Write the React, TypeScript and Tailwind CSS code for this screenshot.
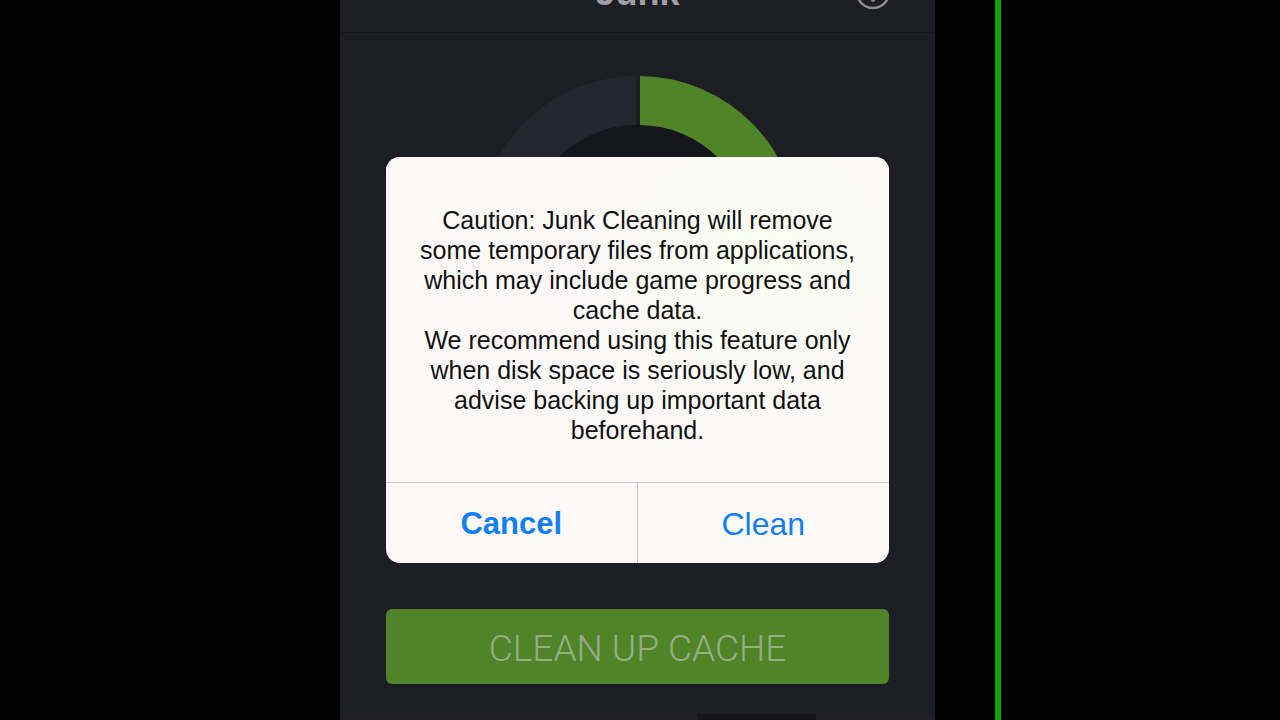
import { useState } from "react"

const CAUTION = [
  "Caution: Junk Cleaning will remove some temporary files from applications, which may include game progress and cache data.",
  "We recommend using this feature only when disk space is seriously low, and advise backing up important data beforehand.",
]

function UsageRing() {
  return (
    <svg viewBox="0 0 322 322" className="mt-[43px] size-[322px]" aria-hidden="true">
      <circle cx="161" cy="161" r="113" fill="#15151c" />
      <path d="M159 0 A160 161 0 1 0 161 322 L161 273 A112 112 0 1 1 159 49 Z" fill="#24262f" />
      <path d="M163 0 A160 161 0 0 1 161 322 L161 273 A112 112 0 0 0 163 49 Z" fill="#508428" />
    </svg>
  )
}

function HelpIcon() {
  return (
    <svg viewBox="0 0 36 36" className="size-9" fill="none" aria-hidden="true">
      <circle cx="18" cy="17" r="16" stroke="#8e8e92" strokeWidth="2.5" />
      <path d="M12 13a6 6 0 1 1 8 5.5c-1.5.6-2 1.500-2 3" stroke="#8e8e92" strokeWidth="2.5" />
      <circle cx="18" cy="25" r="2" fill="#8e8e92" />
    </svg>
  )
}

export default function App() {
  const [open, setOpen] = useState(true)

  return (
    <div className="grid min-h-screen grid-cols-[340fr_595fr_60fr_6px_279fr] overflow-hidden bg-black font-['Liberation_Sans',Arial,sans-serif]">
      <main className="relative col-start-2 flex flex-col bg-[#1d1e23]">
        {/* header is scrolled partly out of view */}
        <header className="-mt-[47px] grid h-20 grid-cols-[1fr_auto_1fr] items-center border-b border-[#15161a] px-11">
          <h1 className="col-start-2 text-4xl leading-9 font-bold text-[#a0a0a4]">Junk</h1>
          <button type="button" aria-label="Help" className="justify-self-end">
            <HelpIcon />
          </button>
        </header>

        <div className="flex flex-1 items-start justify-center">
          <UsageRing />
        </div>

        <div className="px-[46px] pb-[30px]">
          <button
            type="button"
            onClick={() => setOpen(true)}
            className="h-[75px] w-full rounded-md bg-[#508428] pt-1 font-[Roboto,sans-serif] text-[37px] font-light text-[#96ae86]"
          >
            CLEAN UP CACHE
          </button>
        </div>

        <div className="grid h-1.5 grid-cols-5 bg-[#211e24]">
          <span className="col-start-4 bg-[#17131a]" />
        </div>

        {open && (
          <div className="absolute inset-0 flex items-center justify-center px-[46px]">
            <div
              role="alertdialog"
              aria-modal="true"
              aria-describedby="caution"
              className="w-full overflow-hidden rounded-[14px] bg-[#fdf9f9]"
            >
              <div
                id="caution"
                className="bg-[radial-gradient(circle_at_74%_30%,#fbfff3,#fdf9f9_45%)] px-6 pt-12 pb-[37px] text-center text-[25px] leading-[30px] text-[#111]"
              >
                {CAUTION.map((line) => (
                  <p key={line}>{line}</p>
                ))}
              </div>
              <div className="grid grid-cols-2 border-t border-[#d0c9cc] text-[32px] text-[#127fee]">
                <button
                  type="button"
                  onClick={() => setOpen(false)}
                  className="h-20 border-r border-[#d0c9cc] pt-0.5 text-[31px] font-bold"
                >
                  Cancel
                </button>
                <button type="button" onClick={() => setOpen(false)} className="h-20 pt-0.5">
                  Clean
                </button>
              </div>
            </div>
          </div>
        )}
      </main>
      <div className="col-start-4 bg-[#0fa30f]" />
    </div>
  )
}
